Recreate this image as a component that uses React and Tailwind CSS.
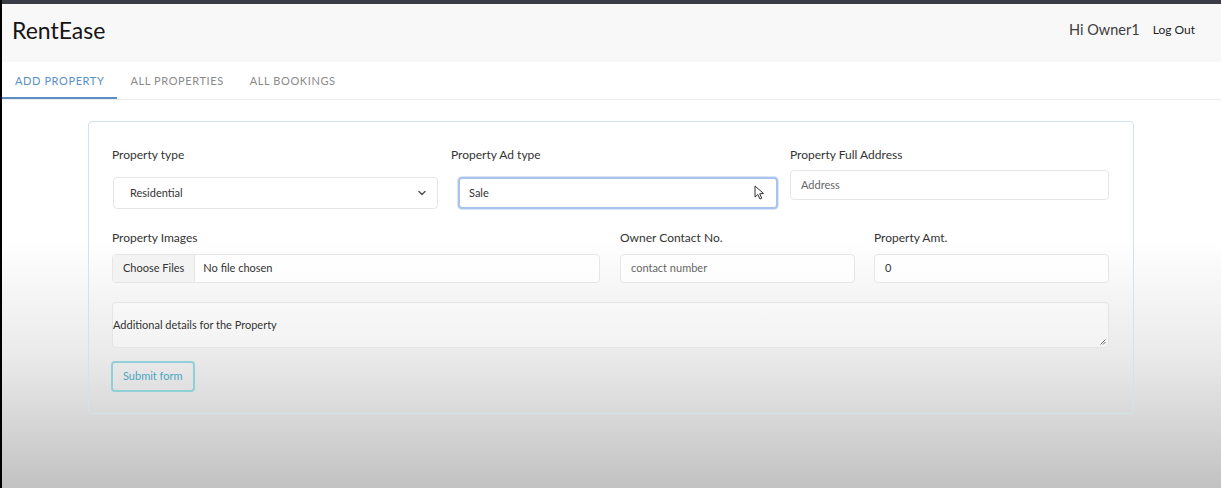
import React from 'react';

const Label = ({ children }) => (
  <label className="block text-[12px] leading-4 text-[#333]">{children}</label>
);

const ChevronDown = () => (
  <svg width="10" height="10" viewBox="0 0 10 10" className="text-[#555]">
    <path d="M2 3.5 L5 6.5 L8 3.5" fill="none" stroke="currentColor" strokeWidth="1.5" strokeLinecap="round" strokeLinejoin="round" />
  </svg>
);

const tabs = ['Add Property', 'All Properties', 'All Bookings'];

export default function App() {
  return (
    <div className="w-[1221px] h-[488px] overflow-hidden border-l-2 border-black flex flex-col font-['Lato','Open_Sans',sans-serif]">
      <div className="h-1 bg-[#3b3b47] shrink-0" />

      {/* navbar */}
      <div className="h-[58px] shrink-0 bg-[#f8f8f9] flex items-center justify-between pl-[10px] pr-[26px] pb-[6px]">
        <span className="text-[23px] text-[#151515]">RentEase</span>
        <div className="flex items-center gap-[13px]">
          <span className="text-[14.5px] text-[#3d3d3d]">Hi Owner1</span>
          <span className="text-[12px] text-[#1f1f1f]">Log Out</span>
        </div>
      </div>

      <div className="flex-1 flex flex-col bg-[linear-gradient(to_bottom,#ffffff_0%,#ffffff_42%,#e9e9e9_70%,#c2c2c2_100%)]">
        {/* tabs */}
        <div className="h-[38px] shrink-0 flex border-b border-[#ececec] bg-white">
          {tabs.map((t, i) => (
            <div
              key={t}
              className={`px-[13px] pt-[3px] flex items-center uppercase text-[11px] tracking-[0.6px] border-b-2 ${
                i === 0 ? 'border-[#5a8fc6] text-[#5a8fc6]' : 'border-transparent text-[#8a8a8a]'
              }`}
            >
              {t}
            </div>
          ))}
        </div>

        {/* form card */}
        <div className="ml-[86px] mt-[21px] w-[1046px] h-[293px] border border-[#d3e3ea] rounded-[4px] pl-[23px] pr-[24px] pt-[25px]">
          <div className="flex">
            <div className="w-[326px]">
              <Label>Property type</Label>
              <div className="mt-[14px] ml-px h-8 border border-[#e6e6e6] rounded-[4px] bg-white/70 flex items-center justify-between pl-[16px] pr-[10px]">
                <span className="text-[11px] text-[#333]">Residential</span>
                <ChevronDown />
              </div>
            </div>
            <div className="ml-[13px] w-[327px]">
              <Label>Property Ad type</Label>
              <div className="mt-[14px] ml-[7px] h-8 border-2 border-[#a9c4ec] rounded-[4px] bg-white flex items-center justify-between pl-[9px] pr-[10px] shadow-[0_0_0_1px_#dbe7f7]">
                <span className="text-[11px] text-[#333]">Sale</span>
                <svg width="12" height="16" viewBox="0 0 12 16">
                  <path d="M1 1 L1 12 L3.8 9.5 L6 14 L7.8 13.2 L5.7 8.8 L9.5 8.5 Z" fill="#fff" stroke="#333" strokeWidth="1" strokeLinejoin="round" />
                </svg>
              </div>
            </div>
            <div className="ml-[12px] w-[319px]">
              <Label>Property Full Address</Label>
              <div className="mt-[7px] h-[30px] border border-[#e6e6e6] rounded-[4px] bg-white/70 flex items-center pl-[10px]">
                <span className="text-[11px] text-[#666]">Address</span>
              </div>
            </div>
          </div>

          <div className="flex mt-[21px]">
            <div className="w-[488px]">
              <Label>Property Images</Label>
              <div className="mt-[8px] h-[29px] border border-[#e6e6e6] rounded-[4px] bg-white/70 flex items-center overflow-hidden">
                <span className="h-full px-[10px] flex items-center bg-[#f3f3f4] border-r border-[#e6e6e6] text-[11px] text-[#333]">Choose Files</span>
                <span className="ml-[8px] text-[11px] text-[#333]">No file chosen</span>
              </div>
            </div>
            <div className="ml-[20px] w-[235px]">
              <Label>Owner Contact No.</Label>
              <div className="mt-[8px] h-[29px] border border-[#e6e6e6] rounded-[4px] bg-white/70 flex items-center pl-[10px]">
                <span className="text-[11px] text-[#666]">contact number</span>
              </div>
            </div>
            <div className="ml-[19px] w-[235px]">
              <Label>Property Amt.</Label>
              <div className="mt-[8px] h-[29px] border border-[#e6e6e6] rounded-[4px] bg-white/70 flex items-center pl-[10px]">
                <span className="text-[11px] text-[#333]">0</span>
              </div>
            </div>
          </div>

          <div className="relative mt-[19px] h-[46px] border border-[#e4e4e4] rounded-[4px] bg-white/40 flex items-center">
            <span className="text-[11px] text-[#333]">Additional details for the Property</span>
            <svg width="6" height="6" viewBox="0 0 6 6" className="absolute right-[2px] bottom-[2px]">
              <path d="M0.5 5.5 L5.5 0.5 M3 5.5 L5.5 3" stroke="#777" strokeWidth="1" />
            </svg>
          </div>

          <button className="mt-[13px] -ml-px h-[31px] px-[10px] border-2 border-[#8fd0d8] rounded-[4px] text-[11px] text-[#4aa6c2] bg-transparent">
            Submit form
          </button>
        </div>
      </div>
    </div>
  );
}
